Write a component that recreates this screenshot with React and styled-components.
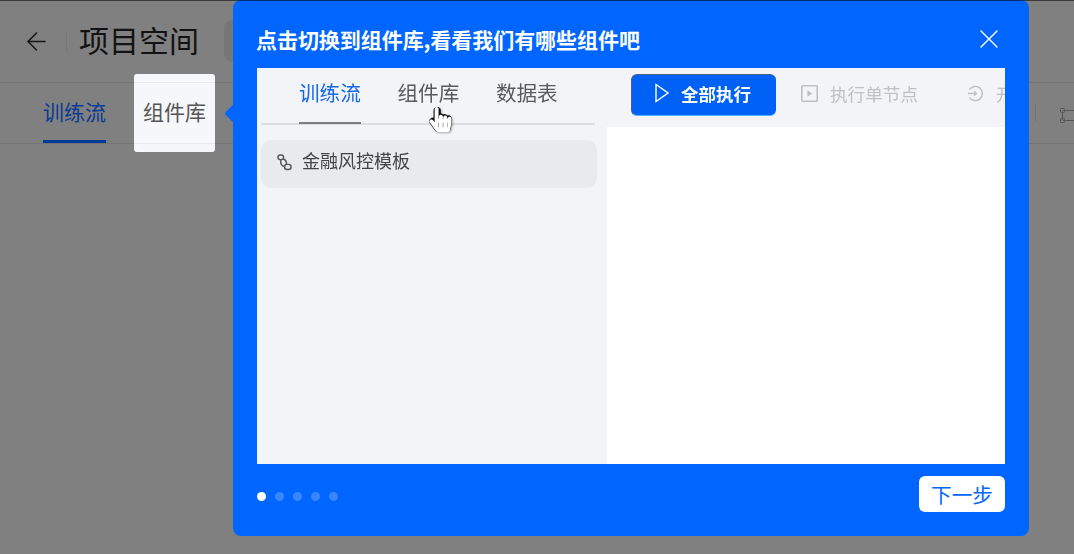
import styled, { createGlobalStyle } from "styled-components";
import { ArrowLeft, X } from "lucide-react";
import { FaHandPointer, FaRegHandPointer } from "react-icons/fa";

const FONT = `"Noto Sans CJK SC", "Noto Sans", sans-serif`;

const GlobalStyle = createGlobalStyle`
  html, body {
    margin: 0;
    padding: 0;
    background: #808080;
  }
  * {
    box-sizing: border-box;
  }
`;

export default function App() {
  return (
    <Page>
      <GlobalStyle />
      <TopLine />
      <Header>
        <ArrowLeft size={29} strokeWidth={1.3} color="#151515" />
        <HeaderDivider />
        <ProjectTitle>项目空间</ProjectTitle>
        <HeaderChip />
      </Header>
      <TabBar>
        <PageTab $active>训练流</PageTab>
        <PageTab $spot>组件库</PageTab>
        <TabBarTools>
          <ToolDivider />
          <NodeGlyph viewBox="0 0 22 15">
            <path d="M3 2.5h16M3 12.5h16M2.5 3v9M19.5 3v9" />
            <rect x="0.5" y="0.5" width="4" height="4" rx="1" />
            <rect x="17.5" y="0.5" width="4" height="4" rx="1" />
            <rect x="0.5" y="10.5" width="4" height="4" rx="1" />
            <rect x="17.5" y="10.5" width="4" height="4" rx="1" />
          </NodeGlyph>
        </TabBarTools>
      </TabBar>

      <Popover>
        <Arrow />
        <PopoverHead>
          <PopoverTitle>点击切换到组件库,看看我们有哪些组件吧</PopoverTitle>
          <X size={32} strokeWidth={1} color="#ffffff" />
        </PopoverHead>

        <Preview>
          <SidePane>
            <SideTabs>
              <SideTab $active>训练流</SideTab>
              <SideTab>
                组件库
                <Cursor>
                  <CursorFill>
                    <FaHandPointer size={25} />
                  </CursorFill>
                  <FaRegHandPointer size={25} stroke="#000000" strokeWidth={14} />
                </Cursor>
              </SideTab>
              <SideTab>数据表</SideTab>
            </SideTabs>
            <TemplateRow>
              <LinkGlyph viewBox="0 0 16 18">
                <rect x="1" y="1" width="6" height="5" rx="2.5" />
                <rect x="8" y="11" width="7" height="5.5" rx="2.7" />
                <path d="M6.5 5c2.5 1 4 2.5 3.5 6M8.5 13.5C5 13 3.5 10 4 6" />
              </LinkGlyph>
              金融风控模板
            </TemplateRow>
          </SidePane>
          <MainPane>
            <Toolbar>
              <RunButton>
                <RunGlyph viewBox="0 0 14 20">
                  <path d="M1 1.5 13 10 1 18.5z" />
                </RunGlyph>
                全部执行
              </RunButton>
              <ToolItem>
                <ToolGlyph viewBox="0 0 16 16">
                  <rect x="0.75" y="0.75" width="14.5" height="14.5" rx="1" />
                  <path d="M6 5l4.5 3L6 11z" fill="#bfc0c4" stroke="none" />
                </ToolGlyph>
                执行单节点
              </ToolItem>
              <ToolItem>
                <ToolGlyph viewBox="0 0 18 18">
                  <path d="M2.5 5A7.5 7.5 0 1 1 2.5 13" />
                  <path d="M1 9h9M7.5 6.5 10 9l-2.5 2.5" />
                </ToolGlyph>
                开
              </ToolItem>
            </Toolbar>
            <Canvas />
          </MainPane>
        </Preview>

        <PopoverFoot>
          <Dots>
            {[0, 1, 2, 3, 4].map((i) => (
              <Dot key={i} $active={i === 0} />
            ))}
          </Dots>
          <NextButton>下一步</NextButton>
        </PopoverFoot>
      </Popover>
    </Page>
  );
}

const Page = styled.div`
  position: relative;
  width: 1074px;
  height: 554px;
  overflow: hidden;
  background: #808080;
  font-family: ${FONT};
`;

const TopLine = styled.div`
  position: absolute;
  top: 0;
  left: 0;
  right: 0;
  height: 1px;
  background: rgba(0, 0, 0, 0.55);
  z-index: 5;
`;

const Header = styled.header`
  display: flex;
  align-items: center;
  height: 83px;
  padding-left: 22px;
  border-bottom: 1px solid #747474;
`;

const HeaderDivider = styled.div`
  width: 1px;
  height: 20px;
  margin: 0 12px 0 15px;
  background: #767676;
`;

const ProjectTitle = styled.h1`
  margin: -4px 0 0;
  font-size: 30px;
  font-weight: 400;
  line-height: 40px;
  color: #121212;
`;

const HeaderChip = styled.div`
  width: 60px;
  height: 42px;
  margin-left: 25px;
  border-radius: 8px;
  background: #777777;
`;

const TabBar = styled.nav`
  display: flex;
  height: 61px;
  padding-left: 43px;
  gap: 37px;
  border-bottom: 1px solid #747474;
`;

const PageTab = styled.div`
  position: relative;
  flex: none;
  isolation: isolate;
  height: 60px;
  padding-top: 12px;
  font-size: 21px;
  line-height: 33px;
  white-space: nowrap;
  color: ${(p) => (p.$active ? "#0a3a94" : "#555555")};
  border-bottom: 3px solid ${(p) => (p.$active ? "#003a99" : "transparent")};

  /* the tour's spotlight sits behind the tab label, the page rules show through */
  &::before {
    content: "";
    display: ${(p) => (p.$spot ? "block" : "none")};
    position: absolute;
    z-index: -1;
    top: -9px;
    left: -9px;
    width: 81px;
    height: 78px;
    border-radius: 3px;
    background:
      linear-gradient(#e8eaed, #e8eaed) 0 8px / 100% 1px no-repeat,
      linear-gradient(#e8eaed, #e8eaed) 0 69px / 100% 1px no-repeat,
      #f5f7fa;
  }
`;

const TabBarTools = styled.div`
  display: flex;
  align-items: center;
  gap: 24px;
  margin-left: 792px;
  flex: none;
  height: 60px;
`;

const ToolDivider = styled.div`
  width: 1px;
  height: 18px;
  background: #757575;
`;

const NodeGlyph = styled.svg`
  width: 22px;
  height: 15px;
  margin-top: 4px;
  fill: none;
  stroke: #555555;
  stroke-width: 1;
`;

const Popover = styled.section`
  position: absolute;
  top: 0;
  left: 233px;
  display: flex;
  flex-direction: column;
  width: 796px;
  height: 536px;
  padding: 0 24px;
  border-radius: 8px;
  background: #0066ff;
`;

const Arrow = styled.div`
  position: absolute;
  top: 107px;
  left: -6px;
  width: 13px;
  height: 13px;
  border-radius: 2px;
  background: #0066ff;
  transform: rotate(45deg);
`;

const PopoverHead = styled.div`
  display: flex;
  align-items: center;
  justify-content: space-between;
  height: 68px;
  padding: 10px 0 0 0;
  margin-left: -1px;
`;

const PopoverTitle = styled.h2`
  margin: 0;
  font-size: 21px;
  font-weight: 700;
  line-height: 24px;
  letter-spacing: -0.05px;
  color: #ffffff;
`;

const Preview = styled.div`
  display: flex;
  height: 396px;
  overflow: hidden;
  background: #f2f4f8;
`;

const SidePane = styled.div`
  flex: none;
  width: 350px;
  padding: 0 12px 0 4px;
  filter: blur(0.5px);
`;

const SideTabs = styled.div`
  display: flex;
  gap: 36.7px;
  height: 57px;
  padding-left: 38px;
  border-bottom: 2px solid #dcdde1;
`;

const SideTab = styled.div`
  position: relative;
  height: 56px;
  padding-top: 8px;
  font-size: 20.6px;
  line-height: 32px;
  color: ${(p) => (p.$active ? "#1668e3" : "#5a5a5a")};
  border-bottom: 2px solid ${(p) => (p.$active ? "#7d7d80" : "transparent")};
`;

const Cursor = styled.div`
  position: absolute;
  top: 39px;
  left: 31px;
  color: #111111;
  line-height: 0;
  filter: drop-shadow(1px 1px 1px rgba(0, 0, 0, 0.3));
`;

const CursorFill = styled.span`
  position: absolute;
  top: 0;
  left: 0;
  color: #ffffff;
`;

const TemplateRow = styled.div`
  display: flex;
  align-items: center;
  gap: 10px;
  width: 336px;
  height: 48px;
  margin-top: 15px;
  padding: 0 0 8px 16px;
  border-radius: 10px;
  background: #e9eaee;
  font-size: 18px;
  color: #444444;
`;

const LinkGlyph = styled.svg`
  width: 15px;
  height: 17px;
  margin-top: 5px;
  fill: none;
  stroke: #555555;
  stroke-width: 1.5;
`;

const MainPane = styled.div`
  display: flex;
  flex: 1;
  flex-direction: column;
  min-width: 0;
`;

const Toolbar = styled.div`
  display: flex;
  align-items: center;
  flex: none;
  gap: 25px;
  height: 59px;
  padding: 0 0 6px 24px;
  white-space: nowrap;
  filter: blur(0.5px);
`;

const RunButton = styled.div`
  display: flex;
  align-items: center;
  gap: 12px;
  flex: none;
  width: 145px;
  height: 42px;
  padding: 0 0 2px 23px;
  border-radius: 6px;
  border-top: 1px solid #4a5f85;
  border-left: 1px solid #4a5f85;
  border-bottom: 1px solid #4db2ff;
  background: #0061f7;
  font-size: 17.5px;
  font-weight: 700;
  color: #ffffff;
`;

const RunGlyph = styled.svg`
  width: 14px;
  height: 20px;
  margin-top: -2px;
  fill: none;
  stroke: #ffffff;
  stroke-width: 1.4;
`;

const ToolItem = styled.div`
  display: flex;
  align-items: center;
  gap: 12px;
  flex: none;
  padding: 0 24px 2px 0;
  font-size: 17.6px;
  color: #bfc0c4;
`;

const ToolGlyph = styled.svg`
  width: 17px;
  height: 17px;
  fill: none;
  stroke: #bfc0c4;
  stroke-width: 1.5;
`;

const Canvas = styled.div`
  flex: 1;
  background: #ffffff;
`;

const PopoverFoot = styled.div`
  display: flex;
  align-items: center;
  justify-content: space-between;
  flex: 1;
  padding-bottom: 12px;
`;

const Dots = styled.div`
  display: flex;
  gap: 9px;
  margin-top: 4px;
`;

const Dot = styled.span`
  width: 9px;
  height: 9px;
  border-radius: 50%;
  background: ${(p) => (p.$active ? "#ffffff" : "rgba(255, 255, 255, 0.22)")};
`;

const NextButton = styled.button`
  width: 86px;
  height: 36px;
  padding: 0;
  border: 0;
  border-radius: 6px;
  background: #ffffff;
  font-family: ${FONT};
  font-size: 20.6px;
  line-height: 36px;
  color: #0066ff;
`;
